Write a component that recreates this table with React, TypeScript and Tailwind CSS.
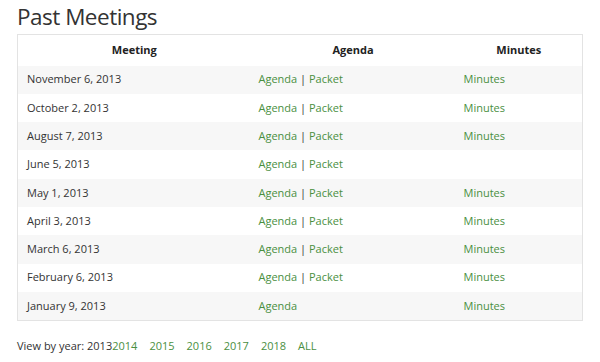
import React from 'react';

const meetings = [
  { date: 'November 6, 2013', packet: true, minutes: true },
  { date: 'October 2, 2013', packet: true, minutes: true },
  { date: 'August 7, 2013', packet: true, minutes: true },
  { date: 'June 5, 2013', packet: true, minutes: false },
  { date: 'May 1, 2013', packet: true, minutes: true },
  { date: 'April 3, 2013', packet: true, minutes: true },
  { date: 'March 6, 2013', packet: true, minutes: true },
  { date: 'February 6, 2013', packet: true, minutes: true },
  { date: 'January 9, 2013', packet: false, minutes: true },
];

const years = ['2014', '2015', '2016', '2017', '2018', 'ALL'];

export default function App() {
  return (
    <div className="w-[600px] h-[362px] bg-white text-[#333] px-[17px] pt-[2px]" style={{ fontFamily: '"Open Sans", sans-serif' }}>
      <h1 className="text-[22.5px] leading-[30px] tracking-[-0.5px] text-[#333] font-normal">Past Meetings</h1>

      <table className="mt-[2px] w-[565px] border border-[#e3e3e3] border-collapse text-[11px] table-fixed">
        <colgroup>
          <col className="w-[233px]" />
          <col className="w-[205px]" />
          <col className="w-[127px]" />
        </colgroup>
        <thead>
          <tr className="h-[31px]">
            <th className="font-bold text-center text-[#222]">Meeting</th>
            <th className="font-bold text-center text-[#222]">Agenda</th>
            <th className="font-bold text-center text-[#222]">Minutes</th>
          </tr>
        </thead>
        <tbody>
          {meetings.map((m, i) => (
            <tr key={m.date} className={`h-[28.3px] ${i % 2 === 0 ? 'bg-[#f7f7f7]' : 'bg-white'}`}>
              <td className="pl-[9px]">{m.date}</td>
              <td className="pl-[8px]">
                <a className="text-[#4a8f3f]">Agenda</a>
                {m.packet && (
                  <>
                    {' '}| <a className="text-[#4a8f3f]">Packet</a>
                  </>
                )}
              </td>
              <td className="pl-[8px]">
                {m.minutes && <a className="text-[#4a8f3f]">Minutes</a>}
              </td>
            </tr>
          ))}
        </tbody>
      </table>

      <div className="mt-[17px] text-[11px] flex">
        <span>View by year: 2013</span>
        <div className="flex gap-[12px]">
          {years.map(y => (
            <a key={y} className="text-[#4a8f3f]">{y}</a>
          ))}
        </div>
      </div>
    </div>
  );
}
